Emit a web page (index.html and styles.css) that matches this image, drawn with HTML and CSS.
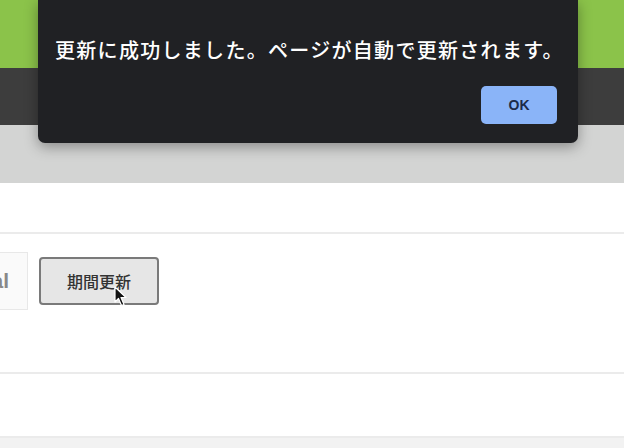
FILE: index.html
```html
<!DOCTYPE html>
<html lang="ja">
<head>
<meta charset="UTF-8">
<title>期間更新</title>
<link rel="stylesheet" href="styles.css">
</head>
<body>
<div class="top-green"></div>
<div class="top-dark"></div>
<div class="top-gray"></div>

<div class="section first"></div>
<div class="section row">
    <div class="total">Total</div>
    <button class="update-btn">期間更新</button>
</div>
<div class="section last"></div>
<div class="footer"></div>

<!-- alert dialog -->
<div class="dialog">
    <p class="dialog-msg">更新に成功しました。ページが自動で更新されます。</p>
    <div class="dialog-actions">
        <button class="ok-btn">OK</button>
    </div>
</div>

<svg class="cursor" width="14" height="22" viewBox="0 0 14 22">
    <path d="M1 1 L1 16 L4.5 12.5 L7.5 19.5 L10 18.5 L7 11.5 L12 11.5 Z" fill="#111" stroke="#fff" stroke-width="1.2" stroke-linejoin="round"/>
</svg>
</body>
</html>
```

FILE: styles.css
```css
body {
margin: 0;
padding: 0;
background: #f2f2f2;
font-family: "Noto Sans CJK JP", "Noto Sans", sans-serif;
overflow: hidden;
}
.top-green {
height: 68px;
background: #8bc34a;
}
.top-dark {
height: 57px;
background: #3d3d3d;
}
.top-gray {
height: 58px;
background: #d3d4d3;
}
.section {
background: #fff;
border-bottom: 2px solid #ebebeb;
box-sizing: border-box;
}
.first {
height: 51px;
}
.row {
height: 140px;
display: flex;
align-items: flex-start;
gap: 11px;
padding-top: 18px;
}
.last {
height: 64px;
}
.total {
margin-left: -43px;
width: 71px;
height: 58px;
box-sizing: border-box;
border: 1px solid #e8e8e8;
background: #fafafa;
color: #888;
font-family: "Liberation Sans", Arial, sans-serif;
font-weight: bold;
font-size: 21px;
line-height: 56px;
text-align: right;
padding-right: 18px;
}
.update-btn {
margin-top: 5px;
width: 120px;
height: 48px;
border: 2px solid #7a7a7a;
border-radius: 4px;
background: #e6e6e6;
color: #333;
font-family: "Noto Sans CJK JP", sans-serif;
font-size: 16px;
font-weight: 500;
padding: 0;
}
.footer {
height: 12px;
}
.dialog {
position: absolute;
top: 0;
left: 38px;
width: 540px;
height: 143px;
background: #202124;
border-radius: 0 0 7px 7px;
box-shadow: 0 4px 14px rgba(0, 0, 0, 0.35);
box-sizing: border-box;
padding: 36px 17px 0 17px;
}
.dialog-msg {
margin: 0;
color: #fff;
font-size: 20px;
font-weight: 500;
line-height: 28px;
letter-spacing: 1.3px;
white-space: nowrap;
}
.dialog-actions {
display: flex;
justify-content: flex-end;
margin-top: 22px;
padding-right: 4px;
}
.ok-btn {
width: 76px;
height: 38px;
border: none;
border-radius: 5px;
background: #8ab4f8;
color: #1c2a48;
font-family: "Liberation Sans", Arial, sans-serif;
font-weight: bold;
font-size: 14px;
}
.cursor {
position: absolute;
left: 114px;
top: 286px;
}
```
